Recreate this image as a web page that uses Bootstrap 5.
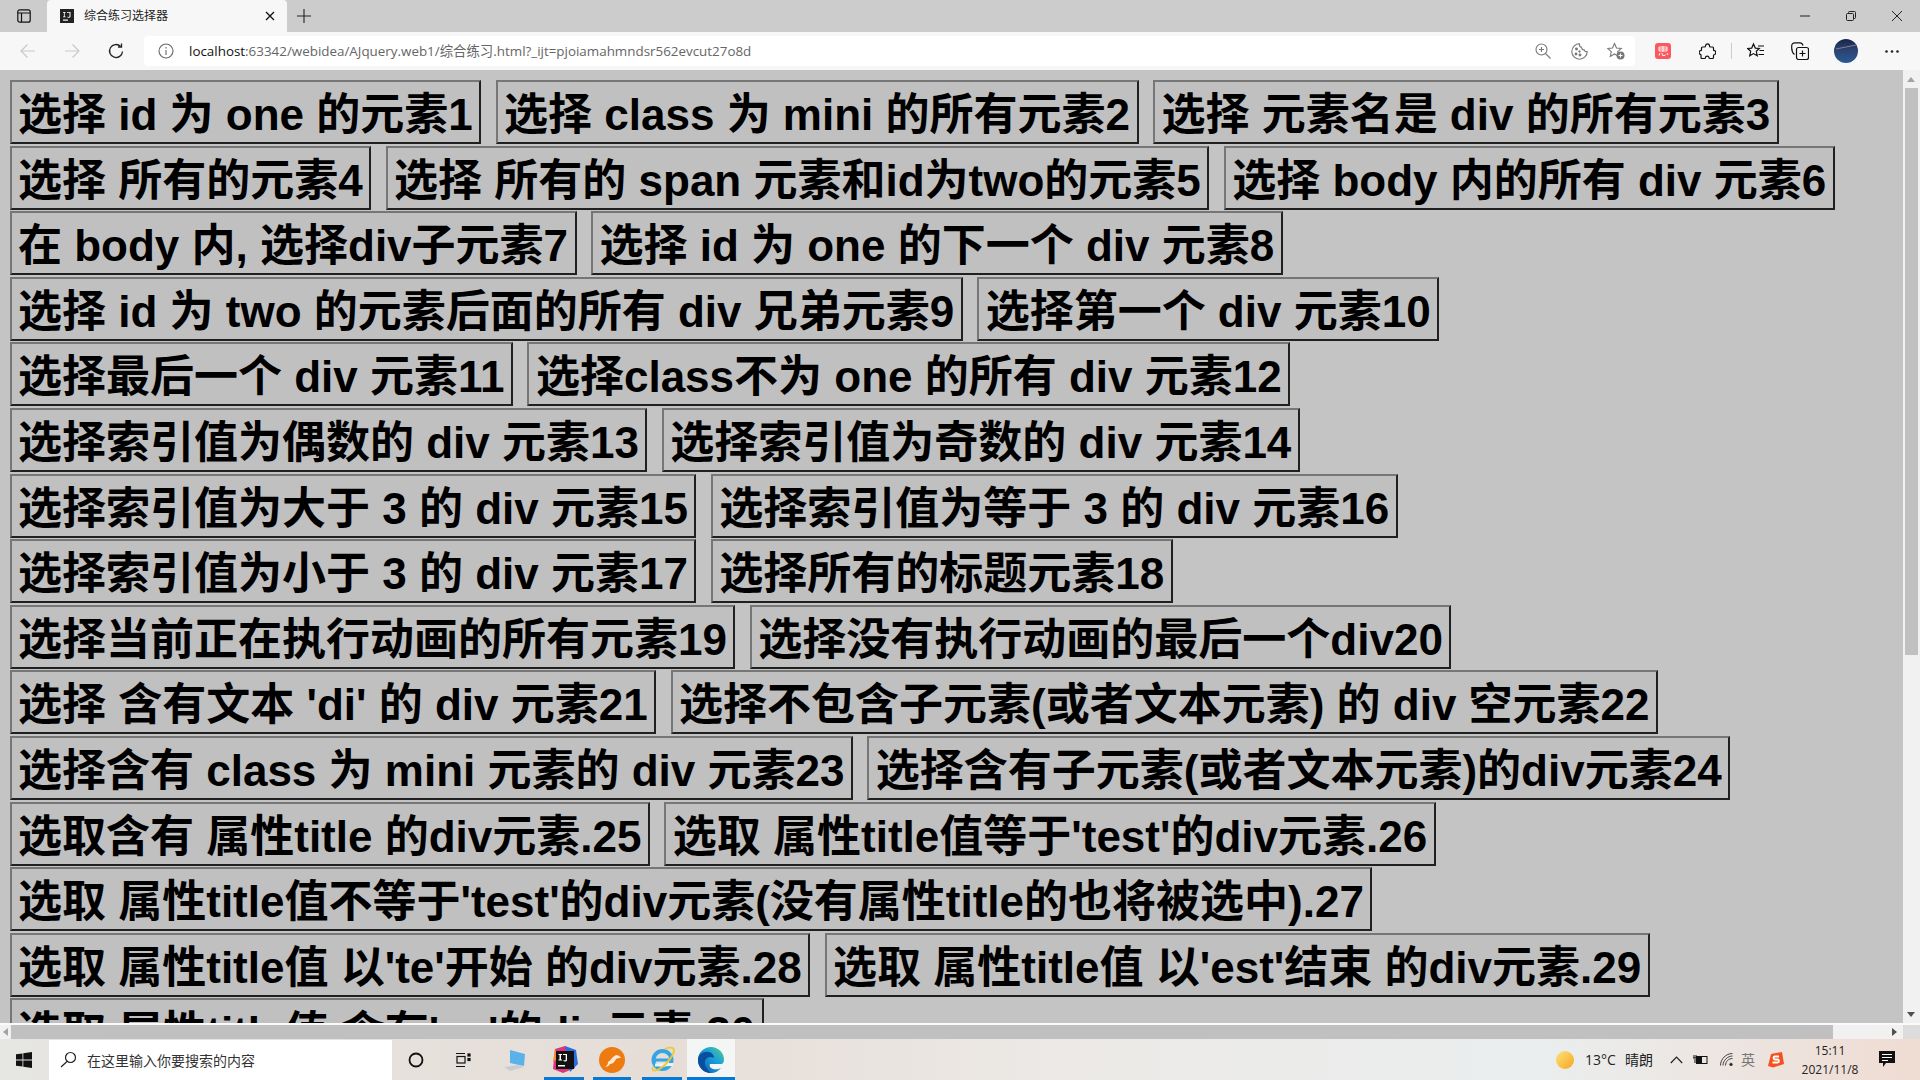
<!DOCTYPE html>
<html lang="zh-CN">
<head>
<meta charset="utf-8">
<title>综合练习选择器</title>
<link href="https://cdn.jsdelivr.net/npm/bootstrap@5.3.0/dist/css/bootstrap.min.css" rel="stylesheet">
<style>
html,body{height:100%;margin:0;overflow:hidden}
body{font-family:"Liberation Sans","Noto Sans CJK SC",sans-serif;background:#c4c4c4;color:#000}
.ui{font-family:"Open Sans","Noto Sans CJK SC",sans-serif}
.tabstrip{height:32px;background:#ccc;flex:none}
.wintab{width:240px;height:32px;margin-left:47px;background:#f7f7f7;border-radius:4px 4px 0 0;font-size:12px;color:#222;padding:0 12px 0 13px}
.wbtn{width:46px;height:32px}
.toolbar{height:38px;background:#f7f7f7;flex:none;position:relative}
.addr{width:1491px;height:30px;margin-left:144px;background:#fff;border-radius:4px;font-size:13.4px;color:#666;padding-left:45px;white-space:nowrap}
.addr b{font-weight:400;color:#111}
.tool{position:absolute;top:0;height:38px;display:flex;align-items:center;justify-content:center;width:28px}
.stage{flex:1 1 auto;min-height:0}
.pageview{flex:1 1 auto;overflow:hidden;padding:10px 0 0 9.500px;background:#c4c4c4;display:flex;flex-direction:column;gap:1.6px}
.btnrow{display:flex;gap:14.4px;flex:none}
.selbtn{height:64px;font:700 44px/52px "Liberation Sans","Noto Sans CJK SC",sans-serif;color:#000;background:#c0c0c0;border-width:2px;border-style:solid;border-color:#767676 #202020 #202020 #767676;padding:7px 6.500px 1px;white-space:nowrap;flex:none}
.vbar{width:17px;flex:none;background:#f1f1f1;position:relative}
.vthumb{position:absolute;left:2px;right:2px;top:18px;height:567px;background:#c0c0c0}
.arrup,.arrdn,.arrl,.arrr{position:absolute;width:0;height:0;border-style:solid;border-color:transparent}
.arrup{left:4px;top:7px;border-width:0 4px 5px;border-bottom-color:#a3a3a3}
.arrdn{left:4px;bottom:6px;border-width:5px 4px 0;border-top-color:#505050}
.hwrap{height:16px;flex:none;border-top:2px solid #fafafa;background:#f1f1f1;position:relative}
.hthumb{position:absolute;left:11px;top:0;bottom:0;width:1822px;background:#c0c0c0}
.arrl{left:3px;top:3px;border-width:4px 5px 4px 0;border-right-color:#a3a3a3}
.arrr{right:23px;top:3px;border-width:4px 0 4px 5px;border-left-color:#505050}
.corner{position:absolute;right:0;top:0;bottom:0;width:17px;background:#dcdcdc}
.taskbar{height:41px;flex:none;background:linear-gradient(90deg,#e6e6e3 0%,#e6ddd7 35%,#ece9e6 55%,#eaeeee 80%,#efdcd3 100%);position:relative}
.searchbox{position:absolute;left:49px;top:1px;width:343px;height:40px;background:#fff;font-size:14px;color:#333;padding-left:38px;display:flex;align-items:center}
.tk{position:absolute;top:0;height:41px;display:flex;align-items:center;justify-content:center}
.tkline{position:absolute;left:0;right:0;bottom:0;height:3px;background:#0a78d0}
.tktext{font-size:14px;color:#222}
.clock{position:absolute;left:1788px;top:2px;width:84px;text-align:center;font-size:12px;line-height:19px;color:#222}
</style>
</head>
<body class="d-flex flex-column">
<div class="tabstrip ui d-flex align-items-center position-relative">
  <svg class="position-absolute" style="left:17px;top:9px" width="14" height="14" viewBox="0 0 14 14" fill="none" stroke="#111" stroke-width="1.2"><rect x=".8" y=".8" width="12.4" height="12.4" rx="2"/><path d="M.8 4h12.4M4.5 4v9"/></svg>
  <div class="wintab d-flex align-items-center">
    <svg width="14" height="14" viewBox="0 0 14 14" class="flex-shrink-0"><rect width="14" height="14" fill="#222"/><rect x="3" y="10.5" width="5" height="1.2" fill="#fff"/><path d="M3 3h2.6v.8H4.7v3.7h.9v.8H3v-.8h.9V3.800H3zM7 3h3.500v4.500c0 1-.8 1.200-1.800 1.200-.6 0-1.200-.2-1.500-.5l.5-.7c.3.3.6.4 1 .4.500 0 .8-.2.800-.6V3.800H7z" fill="#fff"/></svg>
    <span class="flex-grow-1 wtitle" style="margin-left:10px">综合练习选择器</span>
    <svg width="10" height="10" viewBox="0 0 10 10" stroke="#111" stroke-width="1.300"><path d="M1 1l8 8M9 1l-8 8"/></svg>
  </div>
  <svg style="margin-left:10px" width="14" height="14" viewBox="0 0 14 14" stroke="#222" stroke-width="1.100"><path d="M7 0v14M0 7h14"/></svg>
  <div class="ms-auto d-flex me-0">
    <div class="wbtn d-flex align-items-center justify-content-center"><svg width="10" height="10" viewBox="0 0 10 10" stroke="#222"><path d="M0 5h10"/></svg></div>
    <div class="wbtn d-flex align-items-center justify-content-center"><svg width="10" height="10" viewBox="0 0 10 10" fill="none" stroke="#222"><rect x=".5" y="2.500" width="7" height="7" rx="1"/><path d="M2.500 2.500V1.500a1 1 0 0 1 1-1h5a1 1 0 0 1 1 1v5a1 1 0 0 1-1 1h-1"/></svg></div>
    <div class="wbtn d-flex align-items-center justify-content-center"><svg width="10" height="10" viewBox="0 0 10 10" stroke="#222"><path d="M0 0l10 10M10 0L0 10"/></svg></div>
  </div>
</div>
<div class="toolbar ui d-flex align-items-center">
  <div class="tool" style="left:14px"><svg width="16" height="16" viewBox="0 0 16 16" fill="none" stroke="#c9c9c9" stroke-width="1.200"><path d="M15 8H1M7.500 1.500 1 8l6.500 6.500"/></svg></div>
  <div class="tool" style="left:58px"><svg width="16" height="16" viewBox="0 0 16 16" fill="none" stroke="#c9c9c9" stroke-width="1.200"><path d="M1 8h14M8.500 1.500 15 8l-6.500 6.500"/></svg></div>
  <div class="tool" style="left:102px"><svg width="16" height="16" viewBox="0 0 16 16" fill="none" stroke="#222" stroke-width="1.300"><path d="M14.500 8.500A6.500 6.500 0 1 1 12.500 3.300"/><path d="M13.500 .5v3.500H10"/></svg></div>
  <div class="addr d-flex align-items-center"><span><b>localhost</b>:63342/webidea/AJquery.web1/综合练习.html?_ijt=pjoiamahmndsr562evcut27o8d</span></div>
  <div class="tool" style="left:152px"><svg width="16" height="16" viewBox="0 0 16 16" fill="none" stroke="#666" stroke-width="1.100"><circle cx="8" cy="8" r="7"/><path d="M8 7v5M8 4v1.400"/></svg></div>
  <div class="tool" style="left:1529px"><svg width="16" height="16" viewBox="0 0 16 16" fill="none" stroke="#777" stroke-width="1.100"><circle cx="6.500" cy="6.500" r="5.500"/><path d="M10.500 10.500 15.500 15.500M4 6.500h5M6.500 4v5"/></svg></div>
  <div class="tool" style="left:1565px"><svg width="17" height="17" viewBox="0 0 17 17" fill="none" stroke="#777" stroke-width="1.100"><path d="M8.500 .8a7.700 7.700 0 1 0 7.700 7.700c-1.500.5-2.800-.3-3-1.700-1.500.2-2.800-.9-2.700-2.500C9 4 8.200 2.500 8.500 .8z"/><circle cx="5.500" cy="6" r=".9" fill="#777"/><circle cx="5" cy="11" r=".9" fill="#777"/><circle cx="9" cy="12" r=".9" fill="#777"/><circle cx="8.500" cy="8.500" r=".6" fill="#777"/></svg></div>
  <div class="tool" style="left:1602px"><svg width="18" height="18" viewBox="0 0 18 18"><path d="M7.500 1.500 9.500 6l4.800.5-3.600 3.200 1 4.700-4.200-2.400-4.200 2.400 1-4.700L.7 6.500 5.500 6z" fill="none" stroke="#777" stroke-width="1.100"/><circle cx="13.500" cy="13.500" r="4" fill="#777"/><path d="M11.500 13.500h4M13.500 11.500v4" stroke="#fff"/></svg></div>
  <div class="tool" style="left:1649px"><svg width="16" height="16" viewBox="0 0 16 16"><rect width="16" height="16" rx="3" fill="#f85a5f"/><path d="M4 4h8v4H4zM4 6h8M8 3v6M5 10l-1 2.500M7 10l.5 2.500h2.500l.5-1M12 10l1 2" fill="none" stroke="#fff" stroke-width=".9"/></svg></div>
  <div class="tool" style="left:1693px"><svg width="17" height="17" viewBox="0 0 17 17" fill="none" stroke="#111" stroke-width="1.200"><path d="M6.500 3C6.500 .2 10.500 .2 10.500 3c0 .7.400 1 1 1h2c.6 0 1 .4 1 1v1.700c0 .7.500 1 1 1 1.700.2 1.700 3.600 0 3.800-.5 0-1 .3-1 1v2c0 .6-.4 1-1 1h-2.500c-.6 0-1-.4-1-1 0-1.800-3.500-1.800-3.500 0 0 .6-.4 1-1 1H3c-.6 0-1-.4-1-1v-2.300c0-.6-.4-1-1-1-1.300-.5-1-3.500.5-3.500.5 0 1-.4 1-1V5c0-.6.400-1 1-1h2c.6 0 1-.3 1-1z"/></svg></div>
  <div class="position-absolute" style="left:1731px;top:11px;width:1px;height:16px;background:#ccc"></div>
  <div class="tool" style="left:1742px"><svg width="18" height="18" viewBox="0 0 18 18" fill="none" stroke="#111" stroke-width="1.200"><path d="M6.500 2 8.300 6.100l4 .4-3 2.800 1 4.500-3.800-2.200L2.700 13.800l1-4.500-3-2.800 4-.4zM11 4h6M12.500 8.500H17M11.500 12.500H17"/></svg></div>
  <div class="tool" style="left:1786px"><svg width="18" height="18" viewBox="0 0 18 18" fill="none" stroke="#111" stroke-width="1.200"><rect x="5.500" y="5.500" width="12" height="12" rx="2"/><path d="M11.500 8.500v6M8.500 11.500h6M3.500 12.500C1.500 11 .7 9 .7 6V4C.7 2 2 .8 4 .8h5c1.500 0 2.500 1 3 2.700"/></svg></div>
  <div class="tool" style="left:1832px"><svg width="24" height="24" viewBox="0 0 24 24"><defs><linearGradient id="av" x1="0" y1="0" x2="0" y2="1"><stop offset="0" stop-color="#16264a"/><stop offset=".4" stop-color="#2b3f6c"/><stop offset="1" stop-color="#2a5a96"/></linearGradient></defs><circle cx="12" cy="12" r="12" fill="url(#av)"/><path d="M2 10l20-4" stroke="#9a8aa0" stroke-width=".8"/></svg></div>
  <div class="tool" style="left:1878px"><svg width="14" height="3" viewBox="0 0 14 3" fill="#222"><circle cx="1.500" cy="1.500" r="1.300"/><circle cx="7" cy="1.500" r="1.300"/><circle cx="12.500" cy="1.500" r="1.300"/></svg></div>
</div>
<div class="stage d-flex">
  <main class="pageview">
    <div class="btnrow"><button class="selbtn">选择 id 为 one 的元素1</button><button class="selbtn">选择 class 为 mini 的所有元素2</button><button class="selbtn">选择 元素名是 div 的所有元素3</button></div>
    <div class="btnrow"><button class="selbtn">选择 所有的元素4</button><button class="selbtn">选择 所有的 span 元素和id为two的元素5</button><button class="selbtn">选择 body 内的所有 div 元素6</button></div>
    <div class="btnrow"><button class="selbtn">在 body 内, 选择div子元素7</button><button class="selbtn">选择 id 为 one 的下一个 div 元素8</button></div>
    <div class="btnrow"><button class="selbtn">选择 id 为 two 的元素后面的所有 div 兄弟元素9</button><button class="selbtn">选择第一个 div 元素10</button></div>
    <div class="btnrow"><button class="selbtn">选择最后一个 div 元素11</button><button class="selbtn">选择class不为 one 的所有 div 元素12</button></div>
    <div class="btnrow"><button class="selbtn">选择索引值为偶数的 div 元素13</button><button class="selbtn">选择索引值为奇数的 div 元素14</button></div>
    <div class="btnrow"><button class="selbtn">选择索引值为大于 3 的 div 元素15</button><button class="selbtn">选择索引值为等于 3 的 div 元素16</button></div>
    <div class="btnrow"><button class="selbtn">选择索引值为小于 3 的 div 元素17</button><button class="selbtn">选择所有的标题元素18</button></div>
    <div class="btnrow"><button class="selbtn">选择当前正在执行动画的所有元素19</button><button class="selbtn">选择没有执行动画的最后一个div20</button></div>
    <div class="btnrow"><button class="selbtn">选择 含有文本 'di' 的 div 元素21</button><button class="selbtn">选择不包含子元素(或者文本元素) 的 div 空元素22</button></div>
    <div class="btnrow"><button class="selbtn">选择含有 class 为 mini 元素的 div 元素23</button><button class="selbtn">选择含有子元素(或者文本元素)的div元素24</button></div>
    <div class="btnrow"><button class="selbtn">选取含有 属性title 的div元素.25</button><button class="selbtn">选取 属性title值等于'test'的div元素.26</button></div>
    <div class="btnrow"><button class="selbtn">选取 属性title值不等于'test'的div元素(没有属性title的也将被选中).27</button></div>
    <div class="btnrow"><button class="selbtn">选取 属性title值 以'te'开始 的div元素.28</button><button class="selbtn">选取 属性title值 以'est'结束 的div元素.29</button></div>
    <div class="btnrow"><button class="selbtn">选取 属性title值 含有'es'的div元素.30</button></div>
  </main>
  <div class="vbar"><span class="arrup"></span><div class="vthumb"></div><span class="arrdn"></span></div>
</div>
<div class="hwrap"><span class="arrl"></span><div class="hthumb"></div><span class="arrr"></span><div class="corner"></div></div>
<div class="taskbar ui">
  <div class="tk" style="left:16px;width:16px"><svg width="16" height="16" viewBox="0 0 16 16" fill="#111"><path d="M0 2.300 6.500 1.400v6.200H0zM7.300 1.300 16 0v7.600H7.300zM0 8.400h6.500v6.200L0 13.700zM7.300 8.400H16V16l-8.700-1.300z"/></svg></div>
  <div class="searchbox"><svg class="position-absolute" style="left:11px;top:11px" width="17" height="17" viewBox="0 0 17 17" fill="none" stroke="#222" stroke-width="1.200"><circle cx="10.500" cy="6.500" r="5"/><path d="M7 10.500 1 16"/></svg><span>在这里输入你要搜索的内容</span></div>
  <div class="tk" style="left:408px;width:16px"><svg width="16" height="16" viewBox="0 0 16 16" fill="none" stroke="#111" stroke-width="1.800"><circle cx="8" cy="8" r="6.500"/></svg></div>
  <div class="tk" style="left:455px;width:16px"><svg width="16" height="16" viewBox="0 0 16 16" fill="none" stroke="#111" stroke-width="1.200"><rect x="2" y="4.500" width="8" height="6.500"/><path d="M1 1.500h9M1 14.500h9"/><rect x="13" y="2" width="2" height="2" fill="#111"/><rect x="13" y="6.500" width="2" height="2" fill="#111"/></svg></div>
  <div class="tk" style="left:495px;width:40px"><svg width="26" height="24" viewBox="0 0 26 24"><path d="M8 2l15 4-1 12-14-3z" fill="#5ab2ea"/><path d="M2 19l14-2 6 2-14 4z" fill="#c8cdd2"/></svg></div>
  <div class="tk" style="left:544px;width:40px"><svg width="27" height="27" viewBox="0 0 27 27"><path d="M4 3 14 0 24 6v16L12 27 2 23z" fill="#e0347a"/><path d="M14 0l11 4 2 14-8 8z" fill="#2a6ee0"/><path d="M4 3 2 16l6-4z" fill="#f58a2a"/><rect x="5" y="5" width="18" height="18" fill="#111"/><rect x="7" y="19" width="7" height="1.500" fill="#fff"/><path d="M7.500 8h3.500v1h-1v4.500h1v1H7.500v-1h1V9h-1zM12 8h4v6c0 1-.8 1.500-2 1.500-.7 0-1.300-.2-1.800-.7l.7-.9c.3.300.7.500 1 .500.5 0 .8-.2.800-.7V9H12z" fill="#fff"/></svg><div class="tkline"></div></div>
  <div class="tk" style="left:593px;width:38px"><svg width="26" height="26" viewBox="0 0 26 26"><circle cx="13" cy="13" r="13" fill="#ee7a12"/><path d="M6 20c2-1 3-3 3-5 2-1 3-3 5-5l3-2c2 0 4 1 5 3-2 0-4 0-5 1-1 3-4 5-6 5-1 2-3 3-5 3z" fill="#fbe9d4"/></svg><div class="tkline"></div></div>
  <div class="tk" style="left:642px;width:40px"><svg width="27" height="27" viewBox="0 0 27 27" fill="none"><circle cx="13.500" cy="14" r="9" stroke="#36a5e6" stroke-width="4"/><path d="M6 14h15" stroke="#36a5e6" stroke-width="3"/><path d="M24 18.500l-18 .5" stroke="#eef2f2" stroke-width="3"/><path d="M4 21C2 25 6 26 12 22 18 18 25 9 25 4c0-3-6-3-9-1" stroke="#f0c92d" stroke-width="1.800"/></svg><div class="tkline"></div></div>
  <div class="tk" style="left:687px;width:48px;background:#f4f5f5"><svg width="26" height="26" viewBox="0 0 26 26"><defs><linearGradient id="edg" x1="0" y1="1" x2="1" y2="0"><stop offset="0" stop-color="#0b58b0"/><stop offset=".6" stop-color="#1aa1dc"/><stop offset="1" stop-color="#5ad07a"/></linearGradient></defs><path d="M13 0a13 13 0 0 1 13 13c0 2-1 4-3 4H12c-1 2 0 4 3 5 3 .8 6 0 8-1-2.300 3-6 5-10 5A13 13 0 0 1 13 0z" fill="url(#edg)"/><path d="M0 13C0 7 6 4 11 5c3 .7 5 3 5 6-3-2-8-1-9 3-.7 3 1 8 6 12A13 13 0 0 1 0 13z" fill="#0a4f9e"/></svg><div class="tkline"></div></div>
  <div class="tk" style="left:1556px;width:18px"><svg width="18" height="18" viewBox="0 0 18 18"><defs><linearGradient id="sun" x1="0" y1="0" x2="1" y2="1"><stop offset="0" stop-color="#fbe37c"/><stop offset="1" stop-color="#f7a51f"/></linearGradient></defs><circle cx="9" cy="9" r="9" fill="url(#sun)"/></svg></div>
  <div class="tk tktext" style="left:1585px">13°C</div>
  <div class="tk tktext" style="left:1625px">晴朗</div>
  <div class="tk" style="left:1669px;width:14px"><svg width="13" height="8" viewBox="0 0 13 8" fill="none" stroke="#222" stroke-width="1.200"><path d="M.8 7 6.500 1l5.700 6"/></svg></div>
  <div class="tk" style="left:1692px;width:16px"><svg width="16" height="12" viewBox="0 0 16 12" fill="none" stroke="#111"><rect x="4.500" y="2.500" width="10.500" height="7"/><rect x="5.500" y="3.500" width="4" height="5" fill="#111"/><path d="M2 1v3M4 1v3M1 4h4M3 5v4"/></svg></div>
  <div class="tk" style="left:1719px;width:14px"><svg width="13" height="13" viewBox="0 0 13 13" fill="none" stroke="#444"><path d="M.5 12.500C.5 6 6 .5 12.500.5M3 12.500C3 7.500 7.500 3 12.500 3M5.500 12.500c0-4 3-7 7-7"/><circle cx="11" cy="11.500" r="1.300" fill="#222"/></svg></div>
  <div class="tk" style="left:1740px;width:16px;font-size:14px;color:#777">英</div>
  <div class="tk" style="left:1768px;width:16px"><svg width="16" height="16" viewBox="0 0 16 16"><path d="M3 2 14 0l2 12-11 3.500L0 14z" fill="#f4511e"/><path d="M11 4.500H7a1.500 1.500 0 0 0 0 3h2.500a1.500 1.500 0 0 1 0 3H4.500" fill="none" stroke="#fff" stroke-width="1.800"/></svg></div>
  <div class="clock"><div>15:11</div><div>2021/11/8</div></div>
  <div class="tk" style="left:1879px;width:16px"><svg width="16" height="17" viewBox="0 0 16 17"><path d="M0 0h16v12H7l-3 4v-4H0z" fill="#111"/><path d="M3 3.500h10M3 6.500h10M3 9.500h6" stroke="#fff"/></svg></div>
</div>
</body>
</html>
